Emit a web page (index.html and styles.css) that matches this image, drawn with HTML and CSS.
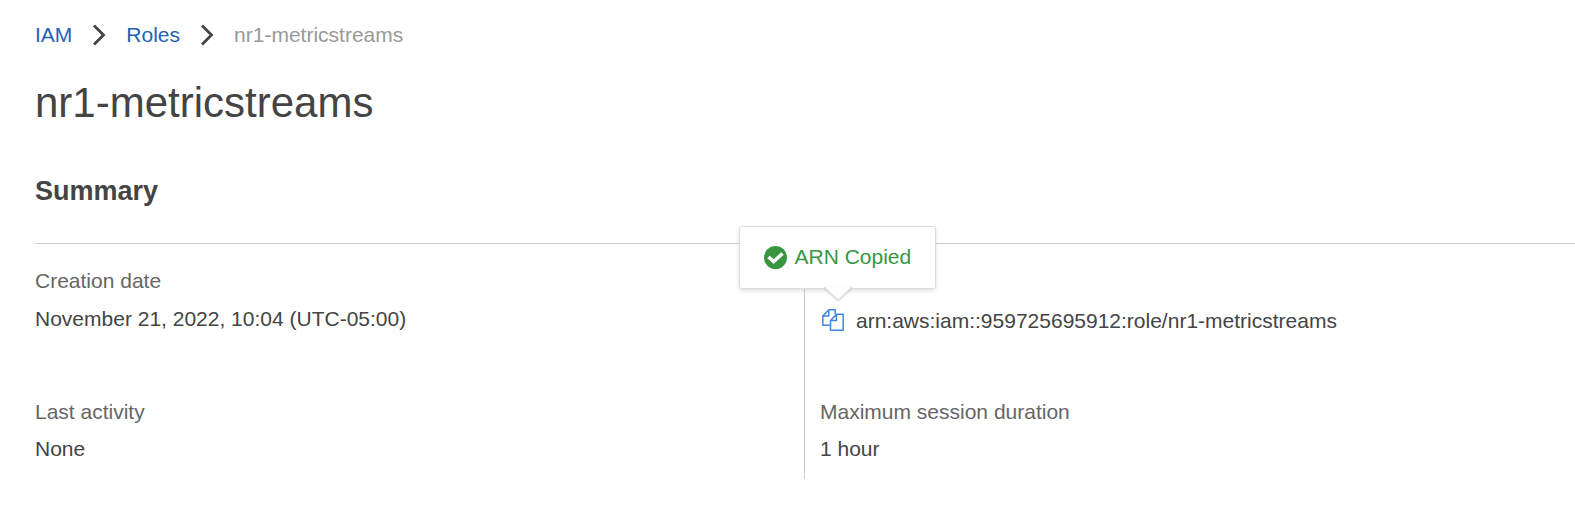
FILE: index.html
```html
<!DOCTYPE html>
<html lang="en">
<head>
<meta charset="utf-8">
<title>nr1-metricstreams</title>
<link rel="stylesheet" href="styles.css">
</head>
<body>
<main class="page">
  <nav class="breadcrumb">
    <a class="crumb" href="#">IAM</a>
    <svg class="chevron" viewBox="0 0 14 22"><path d="M2 1.5 11.5 11 2 20.5"/></svg>
    <a class="crumb" href="#">Roles</a>
    <svg class="chevron" viewBox="0 0 14 22"><path d="M2 1.5 11.5 11 2 20.5"/></svg>
    <span class="crumb current">nr1-metricstreams</span>
  </nav>
  <h1 class="title">nr1-metricstreams</h1>
  <h2 class="heading">Summary</h2>
  <section class="summary">
    <div class="column">
      <div class="field">
        <div class="label">Creation date</div>
        <div class="value">November 21, 2022, 10:04 (UTC-05:00)</div>
      </div>
      <div class="field">
        <div class="label">Last activity</div>
        <div class="value">None</div>
      </div>
    </div>
    <div class="column divided">
      <div class="field arn-field">
        <div class="value arn">
          <svg class="copy" viewBox="0 0 22 22"><path d="M8.5 16.2H.8V7L6.8 .8H13.2V5.3M6.8 .8V7H.8"/><path d="M14.5 5.3H21.2V21.2H8.5V11.5ZM14.5 5.3V11.5H8.5"/></svg>
          <span>arn:aws:iam::959725695912:role/nr1-metricstreams</span>
        </div>
      </div>
      <div class="field">
        <div class="label">Maximum session duration</div>
        <div class="value">1 hour</div>
      </div>
    </div>
    <div class="popover">
      <svg class="check" viewBox="0 0 22 22"><circle cx="11" cy="11" r="11"/><path d="M4.3 10.5 9.2 15 17.7 7.2"/></svg>
      <span>ARN Copied</span>
      <svg class="arrow" viewBox="0 0 30 15"><path class="fill" d="M1 0 13.5 11.5Q15 13 16.5 11.5L29 0Z"/><path class="edge" d="M1 .5H2L13.5 11.5Q15 13 16.5 11.5L28 .5H29"/></svg>
    </div>
  </section>
</main>
</body>
</html>
```
FILE: styles.css
```css
body {
  margin: 0;
  background: #fff;
  color: #444;
  font: 21px/30px "Liberation Sans", Arial, sans-serif;
  overflow: hidden;
}

.page {
  padding: 20px 0 0 35px;
}

.breadcrumb {
  display: flex;
  align-items: center;
  height: 30px;
}

.crumb {
  color: #2561b5;
  text-decoration: none;
}

.current {
  color: #999;
}

.chevron {
  width: 14px;
  height: 22px;
  margin: 0 20px;
  fill: none;
  stroke: #444;
  stroke-width: 2.8;
}

.title {
  margin: 29px 0 0;
  font-size: 42px;
  line-height: 48px;
  font-weight: 400;
}

.heading {
  margin: 49px 0 0;
  font-size: 27px;
  line-height: 30px;
}

.summary {
  position: relative;
  display: grid;
  grid-template-columns: 769px 1fr;
  margin-top: 37px;
  height: 235px;
  border-top: 1px solid #ccc;
}

.column {
  display: flex;
  flex-direction: column;
  gap: 55px;
  padding-top: 22px;
  box-sizing: border-box;
}

.divided {
  border-left: 1px solid #ccc;
  padding-left: 15px;
}

.field {
  display: flex;
  flex-direction: column;
  gap: 8px;
  height: 76px;
  box-sizing: border-box;
}

.field:last-child {
  gap: 7px;
}

.label {
  color: #666;
}

.arn-field {
  justify-content: flex-end;
  padding-bottom: 6px;
}

.arn {
  display: flex;
  align-items: center;
  gap: 12px;
  padding-left: 2px;
}

.copy {
  width: 22px;
  height: 22px;
  margin-bottom: 2px;
  fill: #fff;
  stroke: #3b88de;
  stroke-width: 1.5;
  stroke-linejoin: round;
}

.popover {
  position: absolute;
  left: 704px;
  top: -18px;
  display: flex;
  align-items: center;
  gap: 8px;
  width: 197px;
  height: 63px;
  padding: 0 24px 1px;
  box-sizing: border-box;
  border: 1px solid #dcdede;
  border-radius: 3px;
  background: #fff;
  box-shadow: 0 2px 4px rgba(0, 0, 0, .12);
  color: #389640;
  white-space: nowrap;
}

.check {
  flex: none;
  width: 23px;
  height: 23px;
  margin-left: -0.5px;
  fill: #389640;
}

.check path {
  fill: none;
  stroke: #fff;
  stroke-width: 3.4;
}

.arrow {
  position: absolute;
  left: 83px;
  top: 60px;
  width: 30px;
  height: 15px;
  overflow: visible;
  filter: drop-shadow(0 1px 1px rgba(0, 0, 0, .2));
}

.arrow .fill {
  fill: #fff;
}

.arrow .edge {
  fill: none;
  stroke: #dcdede;
}
```
